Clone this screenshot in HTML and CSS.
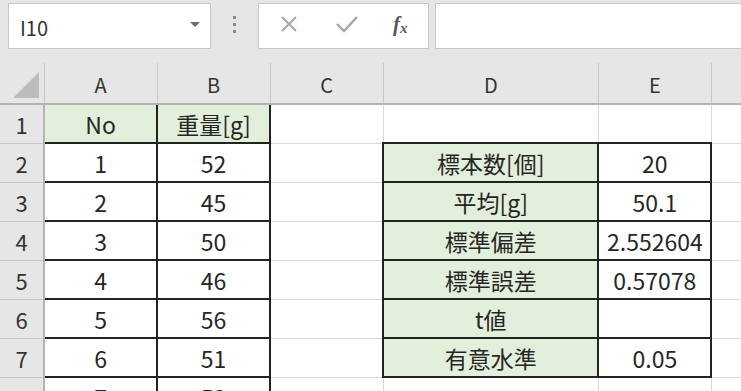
FILE: index.html
```html
<!DOCTYPE html>
<html lang="ja">

<head>
    <meta charset="utf-8">
    <title>t検定</title>
    <link rel="stylesheet" href="styles.css">
</head>

<body>
    <div class="formula-bar">
        <div class="name-box">
            <span class="name-text">I10</span>
            <span class="caret"></span>
        </div>
        <div class="grip"><i></i><i></i><i></i></div>
        <div class="fx-buttons">
            <svg class="icon" width="18" height="18" viewBox="0 0 18 18">
                <path d="M2 2 L16 16 M16 2 L2 16" stroke="#a6a6a6" stroke-width="2" fill="none"/>
            </svg>
            <svg class="icon" width="24" height="18" viewBox="0 0 24 18">
                <path d="M2 9 L9 16 L22 2" stroke="#a6a6a6" stroke-width="2.4" fill="none"/>
            </svg>
            <span class="fx">f<span class="fx-x">x</span></span>
        </div>
        <div class="formula-input"></div>
    </div>

    <table class="sheet">
        <colgroup>
            <col class="c-head">
            <col class="c-std">
            <col class="c-std">
            <col class="c-std">
            <col class="c-wide">
            <col class="c-std">
            <col class="c-std">
        </colgroup>
        <tr class="head-row">
            <th class="corner">
                <svg width="44" height="40" viewBox="0 0 44 40">
                    <polygon points="13,35 39,9 39,35" fill="#bcbcbc"/>
                </svg>
            </th>
            <th>A</th><th>B</th><th>C</th><th>D</th><th>E</th><th></th>
        </tr>
        <tr>
            <th class="row-head">1</th>
            <td class="box label">No</td><td class="box label">重量[g]</td>
            <td></td><td></td><td></td><td></td>
        </tr>
        <tr>
            <th class="row-head">2</th>
            <td class="box">1</td><td class="box">52</td>
            <td></td><td class="box label">標本数[個]</td><td class="box">20</td><td></td>
        </tr>
        <tr>
            <th class="row-head">3</th>
            <td class="box">2</td><td class="box">45</td>
            <td></td><td class="box label">平均[g]</td><td class="box">50.1</td><td></td>
        </tr>
        <tr>
            <th class="row-head">4</th>
            <td class="box">3</td><td class="box">50</td>
            <td></td><td class="box label">標準偏差</td><td class="box">2.552604</td><td></td>
        </tr>
        <tr>
            <th class="row-head">5</th>
            <td class="box">4</td><td class="box">46</td>
            <td></td><td class="box label">標準誤差</td><td class="box">0.57078</td><td></td>
        </tr>
        <tr>
            <th class="row-head">6</th>
            <td class="box">5</td><td class="box">56</td>
            <td></td><td class="box label">t値</td><td class="box"></td><td></td>
        </tr>
        <tr>
            <th class="row-head">7</th>
            <td class="box">6</td><td class="box">51</td>
            <td></td><td class="box label">有意水準</td><td class="box">0.05</td><td></td>
        </tr>
        <tr>
            <th class="row-head">8</th>
            <td class="box">7</td><td class="box">53</td>
            <td></td><td></td><td></td><td></td>
        </tr>
    </table>
</body>

</html>
```

FILE: styles.css
```css
html, body {
    margin: 0;
    padding: 0;
    overflow: hidden;
    background: #e6e6e6;
    font-family: "Noto Sans CJK JP", "Noto Sans", sans-serif;
    color: #262626;
}

/* formula bar */
.formula-bar {
    display: flex;
    align-items: flex-start;
    height: 63px;
    padding-top: 3px;
    box-sizing: border-box;
}

.name-box {
    margin-left: 8px;
    width: 203px;
    height: 46px;
    box-sizing: border-box;
    background: #fff;
    border: 1px solid #c6c6c6;
    display: flex;
    align-items: center;
    padding: 0 10px 0 11px;
}

.name-text {
    flex: 1;
    font-size: 20px;
    color: #333;
    padding-top: 3px;
}

.caret {
    width: 0;
    height: 0;
    border-left: 5px solid transparent;
    border-right: 5px solid transparent;
    border-top: 5px solid #6a6a6a;
    margin-top: -4px;
}

.grip {
    width: 47px;
    height: 46px;
    display: flex;
    flex-direction: column;
    align-items: center;
    justify-content: center;
    gap: 4px;
    padding-bottom: 4px;
    box-sizing: border-box;
}

.grip i {
    width: 3px;
    height: 3px;
    background: #8a8a8a;
}

.fx-buttons {
    width: 171px;
    height: 46px;
    box-sizing: border-box;
    background: #fff;
    border: 1px solid #c6c6c6;
    display: flex;
    align-items: center;
    padding: 0 0 4px 21px;
    gap: 37px;
}

.fx {
    font-family: "Liberation Serif", serif;
    font-style: italic;
    font-weight: bold;
    font-size: 21px;
    color: #5a5a5a;
    margin-left: -3px;
}

.fx-x {
    font-size: 15px;
    position: relative;
    top: 2px;
}

.formula-input {
    flex: 1;
    margin-left: 6px;
    margin-right: -4px;
    height: 46px;
    box-sizing: border-box;
    background: #fff;
    border: 1px solid #c6c6c6;
}

/* sheet grid */
.sheet {
    border-collapse: collapse;
    table-layout: fixed;
    width: 825px;
    background: #fff;
}

.c-head { width: 44px; }
.c-std { width: 113px; }
.c-wide { width: 215px; }

.sheet th,
.sheet td {
    padding: 0;
    text-align: center;
    vertical-align: middle;
    overflow: hidden;
    white-space: nowrap;
}

.head-row th {
    height: 36px;
    background: #e6e6e6;
    font-weight: normal;
    font-size: 20px;
    color: #333;
    border-right: 1px solid #c9c9c9;
    border-bottom: 2px solid #b4b4b4;
    padding-top: 2px;
}

.head-row th.corner {
    padding: 0;
    line-height: 0;
}

.row-head {
    height: 37px;
    background: #e6e6e6;
    font-weight: normal;
    font-size: 22px;
    color: #333;
    border-right: 2px solid #b4b4b4;
    border-bottom: 1px solid #c9c9c9;
}

.sheet td {
    height: 37px;
    font-size: 23px;
    border: 1px solid #dadada;
}

.sheet td.box {
    border: 2px solid #222;
}

.sheet td.label {
    background: #e2efda;
}
```
